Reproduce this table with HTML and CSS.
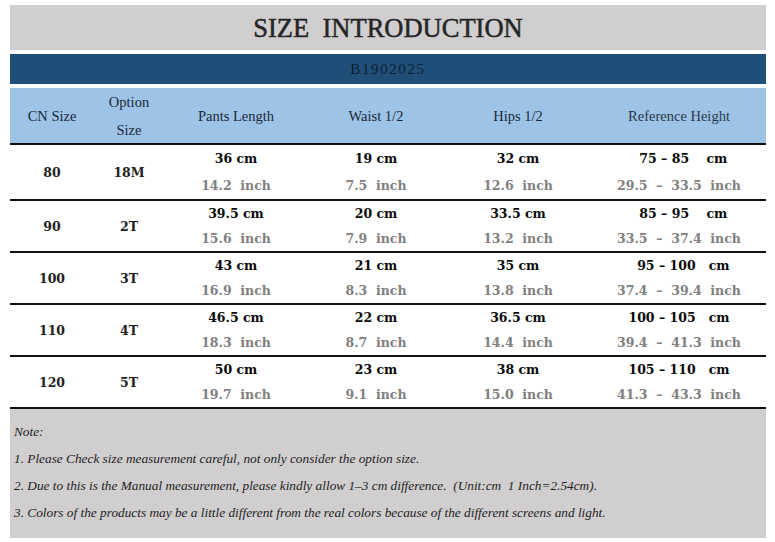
FILE: index.html
```html
<!DOCTYPE html>
<html lang="en">
<head>
<meta charset="utf-8">
<title>Size Introduction</title>
<link rel="stylesheet" href="styles.css">
</head>
<body>
<div class="sheet">
  <div class="title">SIZE&nbsp;&nbsp;INTRODUCTION</div>
  <div class="code">B1902025</div>
  <div class="thead">
    <div class="th">CN Size</div>
    <div class="th th-stack"><span>Option</span><span>Size</span></div>
    <div class="th">Pants Length</div>
    <div class="th">Waist 1/2</div>
    <div class="th">Hips 1/2</div>
    <div class="th th-ref">Reference Height</div>
  </div>

  <div class="row row-first">
    <div class="td">80</div>
    <div class="td">18M</div>
    <div class="td dual"><span class="cm">36 cm</span><span class="in">14.2&nbsp;&nbsp;inch</span></div>
    <div class="td dual"><span class="cm">19 cm</span><span class="in">7.5&nbsp;&nbsp;inch</span></div>
    <div class="td dual"><span class="cm">32 cm</span><span class="in">12.6&nbsp;&nbsp;inch</span></div>
    <div class="td dual ref"><span class="cm">&nbsp;&nbsp;75 – 85&nbsp;&nbsp;&nbsp;&nbsp;cm</span><span class="in">29.5&nbsp; –&nbsp; 33.5&nbsp; inch</span></div>
  </div>
  <div class="row">
    <div class="td">90</div>
    <div class="td">2T</div>
    <div class="td dual"><span class="cm">39.5 cm</span><span class="in">15.6&nbsp;&nbsp;inch</span></div>
    <div class="td dual"><span class="cm">20 cm</span><span class="in">7.9&nbsp;&nbsp;inch</span></div>
    <div class="td dual"><span class="cm">33.5 cm</span><span class="in">13.2&nbsp;&nbsp;inch</span></div>
    <div class="td dual ref"><span class="cm">&nbsp;&nbsp;85 – 95&nbsp;&nbsp;&nbsp;&nbsp;cm</span><span class="in">33.5&nbsp; –&nbsp; 37.4&nbsp; inch</span></div>
  </div>
  <div class="row">
    <div class="td">100</div>
    <div class="td">3T</div>
    <div class="td dual"><span class="cm">43 cm</span><span class="in">16.9&nbsp;&nbsp;inch</span></div>
    <div class="td dual"><span class="cm">21 cm</span><span class="in">8.3&nbsp;&nbsp;inch</span></div>
    <div class="td dual"><span class="cm">35 cm</span><span class="in">13.8&nbsp;&nbsp;inch</span></div>
    <div class="td dual ref"><span class="cm">&nbsp;&nbsp;95 – 100&nbsp;&nbsp;&nbsp;cm</span><span class="in">37.4&nbsp; –&nbsp; 39.4&nbsp; inch</span></div>
  </div>
  <div class="row">
    <div class="td">110</div>
    <div class="td">4T</div>
    <div class="td dual"><span class="cm">46.5 cm</span><span class="in">18.3&nbsp;&nbsp;inch</span></div>
    <div class="td dual"><span class="cm">22 cm</span><span class="in">8.7&nbsp;&nbsp;inch</span></div>
    <div class="td dual"><span class="cm">36.5 cm</span><span class="in">14.4&nbsp;&nbsp;inch</span></div>
    <div class="td dual ref"><span class="cm">100 – 105&nbsp;&nbsp;&nbsp;cm</span><span class="in">39.4&nbsp; –&nbsp; 41.3&nbsp; inch</span></div>
  </div>
  <div class="row">
    <div class="td">120</div>
    <div class="td">5T</div>
    <div class="td dual"><span class="cm">50 cm</span><span class="in">19.7&nbsp;&nbsp;inch</span></div>
    <div class="td dual"><span class="cm">23 cm</span><span class="in">9.1&nbsp;&nbsp;inch</span></div>
    <div class="td dual"><span class="cm">38 cm</span><span class="in">15.0&nbsp;&nbsp;inch</span></div>
    <div class="td dual ref"><span class="cm">105 – 110&nbsp;&nbsp;&nbsp;cm</span><span class="in">41.3&nbsp; –&nbsp; 43.3&nbsp; inch</span></div>
  </div>

  <div class="note">
    <p>Note:</p>
    <p>1. Please Check size measurement careful, not only consider the option size.</p>
    <p>2. Due to this is the Manual measurement, please kindly allow 1–3 cm difference.&nbsp; (Unit:cm&nbsp; 1 Inch=2.54cm).</p>
    <p>3. Colors of the products may be a little different from the real colors because of the different screens and light.</p>
  </div>
</div>
</body>
</html>
```

FILE: styles.css
```css
* { box-sizing: border-box; }

html, body {
  margin: 0;
  padding: 0;
  background: #ffffff;
}

.sheet {
  width: 756px;
  margin: 5px 0 0 10px;
  font-family: "Liberation Serif", "Times New Roman", serif;
}

.title {
  height: 45px;
  background: #d0cece;
  text-align: center;
  font-size: 26.5px;
  line-height: 46px;
  color: #262626;
  -webkit-text-stroke: 0.5px #262626;
}

.code {
  margin-top: 4px;
  height: 30px;
  background: #1f4e79;
  color: #0d1d33;
  text-align: center;
  font-size: 15px;
  line-height: 30px;
  letter-spacing: 1.6px;
}

.thead {
  margin-top: 4px;
  height: 57px;
  background: #9dc3e6;
  border-bottom: 2px solid #111;
  display: grid;
  grid-template-columns: 84px 70px 144px 136px 148px 174px;
}

.th {
  display: flex;
  align-items: center;
  justify-content: center;
  font-size: 14.5px;
  color: #1b2838;
  padding-bottom: 2px;
}

.th-stack {
  flex-direction: column;
  line-height: 28px;
}

.th-ref { color: #2a3848; }

.row {
  display: grid;
  grid-template-columns: 84px 70px 144px 136px 148px 174px;
  height: 52px;
  border-bottom: 2px solid #111;
  font-family: "DejaVu Serif", serif;
  font-weight: bold;
  font-size: 12.5px;
}

.row-first { height: 56px; }

.td {
  display: flex;
  align-items: center;
  justify-content: center;
  color: #222;
}

.dual {
  flex-direction: column;
  align-items: stretch;
}

.dual span {
  flex: 1;
  display: flex;
  align-items: center;
  justify-content: center;
  white-space: pre;
}

.cm { color: #0a0a0a; }
.in { color: #808080; }

.note {
  height: 129px;
  background: #d0cece;
  padding: 9px 0 0 4px;
  font-style: italic;
  font-size: 13.3px;
  color: #1e1e1e;
}

.note p {
  margin: 0;
  line-height: 27px;
}
```
